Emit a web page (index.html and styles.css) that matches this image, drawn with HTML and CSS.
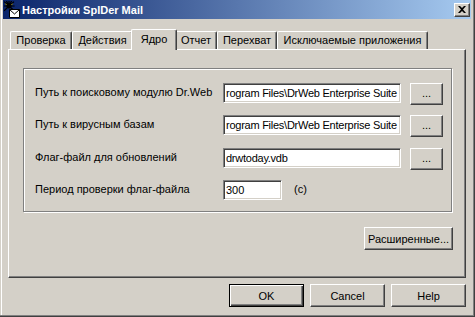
FILE: index.html
```html
<!DOCTYPE html>
<html lang="ru">
<head>
<meta charset="utf-8">
<title>Настройки SpIDer Mail</title>
<link rel="stylesheet" href="styles.css">
</head>
<body>
<div class="window">
  <div class="titlebar">
    <svg class="app-icon" width="16" height="17" viewBox="0 0 16 17">
      <g stroke="#000" stroke-width="1.2" fill="none" stroke-linecap="square">
        <path d="M0.5 1 L5 5 M5 0.5 L5 5 M9.5 1 L5 5 M0 5 L10 5 M0.5 9.5 L5 5 M9.5 9 L5 5 M2.5 0 L5 5 M7.5 0 L5 5"/>
      </g>
      <ellipse cx="5" cy="5" rx="2.6" ry="2.4" fill="#000"/>
      <path d="M1.5 3 L2.5 3.5 M8.5 3 L7.5 3.5" stroke="#d8c400" stroke-width="1"/>
      <path d="M5.5 8.5 H15.5 V16.5 H5.5 Z" fill="#fff" stroke="#000"/>
      <path d="M5.5 8.5 L10.5 13 L15.5 8.5" fill="none" stroke="#000"/>
    </svg>
    <span class="title">Настройки SpIDer Mail</span>
    <span class="close-btn">
      <svg width="8" height="7" viewBox="0 0 8 7"><path d="M0 0 L2 0 L4 2 L6 0 L8 0 L5 3.5 L8 7 L6 7 L4 5 L2 7 L0 7 L3 3.5 Z" fill="#000"/></svg>
    </span>
  </div>
  <div class="content">
    <div class="tabs">
      <div class="tab tab-check">Проверка</div>
      <div class="tab tab-actions">Действия</div>
      <div class="tab tab-core selected">Ядро</div>
      <div class="tab tab-report">Отчет</div>
      <div class="tab tab-intercept">Перехват</div>
      <div class="tab tab-excl">Исключаемые приложения</div>
    </div>
    <div class="panel">
      <div class="group">
        <div class="row">
          <span class="label">Путь к поисковому модулю Dr.Web</span>
          <span class="field wide">rogram Files\DrWeb Enterprise Suite</span>
          <button class="btn browse">...</button>
        </div>
        <div class="row">
          <span class="label">Путь к вирусным базам</span>
          <span class="field wide">rogram Files\DrWeb Enterprise Suite</span>
          <button class="btn browse">...</button>
        </div>
        <div class="row row3">
          <span class="label">Флаг-файл для обновлений</span>
          <span class="field wide">drwtoday.vdb</span>
          <button class="btn browse">...</button>
        </div>
        <div class="row">
          <span class="label">Период проверки флаг-файла</span>
          <span class="field short">300</span>
          <span class="unit">(c)</span>
        </div>
      </div>
      <div class="panel-actions">
        <button class="btn adv">Расширенные...</button>
      </div>
    </div>
    <div class="dialog-buttons">
      <button class="btn dlg default">OK</button>
      <button class="btn dlg">Cancel</button>
      <button class="btn dlg">Help</button>
    </div>
  </div>
</div>
</body>
</html>
```
FILE: styles.css
```css
* { box-sizing: border-box; }
html, body { margin: 0; padding: 0; }
body {
  width: 475px;
  height: 317px;
  background: #d4d0c8;
  font-family: "Liberation Sans", Arial, sans-serif;
  font-size: 11px;
  color: #000;
  overflow: hidden;
}
.window {
  width: 475px;
  height: 317px;
  padding: 0 4px 3px 3px;
  background: #d4d0c8;
  box-shadow: inset -1px -1px 0 #404040, inset -2px -2px 0 #808080, inset 1px 0 0 #d4d0c8, inset 2px 0 0 #fff;
  display: flex;
  flex-direction: column;
}
.titlebar {
  height: 19px;
  display: flex;
  align-items: center;
  padding-left: 1px;
  padding-right: 1px;
  background: linear-gradient(to right, #0a246a, #a6caf0);
}
.app-icon { display: block; flex: none; }
.title {
  margin-left: 2px;
  color: #fff;
  font-weight: bold;
  font-size: 11px;
  flex: 1;
  white-space: nowrap;
}
.close-btn {
  width: 16px;
  height: 14px;
  background: #d4d0c8;
  border: 1px solid;
  border-color: #fff #404040 #404040 #fff;
  box-shadow: inset -1px -1px 0 #808080;
  display: flex;
  align-items: center;
  justify-content: center;
  padding-bottom: 1px;
}
.close-btn svg { display: block; }
.content {
  flex: 1;
  display: flex;
  flex-direction: column;
}
.tabs {
  height: 30px;
  display: flex;
  align-items: flex-end;
  padding-left: 7px;
}
.tab {
  height: 18px;
  border-top: 1px solid #fff;
  border-left: 1px solid #fff;
  border-right: 1px solid #404040;
  box-shadow: inset -1px 0 0 #808080;
  border-radius: 2px 2px 0 0;
  display: flex;
  align-items: center;
  justify-content: center;
  white-space: nowrap;
  padding-bottom: 1px;
  background: #d4d0c8;
}
.tab-check { width: 62px; }
.tab-actions { width: 61px; }
.tab-core { width: 42px; }
.tab-report { width: 42px; }
.tab-intercept { width: 60px; }
.tab-excl { width: 151px; }
.tab.selected {
  width: 46px;
  height: 21px;
  margin: 0 -2px -1px -2px;
  position: relative;
  z-index: 1;
  padding-bottom: 3px;
}
.panel {
  margin: 0 5px 0 5px;
  height: 229px;
  border-top: 1px solid #fff;
  border-left: 1px solid #fff;
  border-right: 1px solid #404040;
  border-bottom: 1px solid #404040;
  box-shadow: inset -1px -1px 0 #808080;
  display: flex;
  flex-direction: column;
}
.group {
  margin: 18px 13px 0 14px;
  height: 144px;
  border: 1px solid #808080;
  box-shadow: inset 1px 1px 0 #fff, 1px 1px 0 #fff;
  padding: 14px 0 0 11px;
  display: flex;
  flex-direction: column;
  gap: 10px;
}
.row {
  height: 22px;
  display: flex;
  align-items: flex-start;
}
.row3 { margin-top: 1px; }
.label {
  width: 188px;
  height: 20px;
  line-height: 18px;
  white-space: nowrap;
}
.field {
  height: 20px;
  background: #fff;
  border: 1px solid;
  border-color: #808080 #fff #fff #808080;
  box-shadow: inset 1px 1px 0 #404040, inset -1px -1px 0 #d4d0c8;
  padding: 0 1px 0 2px;
  line-height: 18px;
  white-space: nowrap;
  overflow: hidden;
}
.field.wide { width: 178px; letter-spacing: -0.25px; }
.field.short { width: 59px; }
.unit {
  margin-left: 12px;
  line-height: 18px;
}
.btn {
  font-family: inherit;
  font-size: 11px;
  color: #000;
  background: #d4d0c8;
  border: 1px solid;
  border-color: #fff #404040 #404040 #fff;
  box-shadow: inset -1px -1px 0 #808080;
  padding: 0;
  margin: 0;
  border-radius: 0;
  display: flex;
  align-items: center;
  justify-content: center;
}
.browse {
  width: 33px;
  height: 22px;
  margin-left: 9px;
  padding-bottom: 2px;
}
.panel-actions {
  display: flex;
  justify-content: flex-end;
  margin: 15px 12px 0 0;
}
.adv {
  width: 89px;
  height: 23px;
}
.dialog-buttons {
  display: flex;
  justify-content: flex-end;
  gap: 6px;
  margin: 6px 5px 0 0;
}
.dlg {
  width: 75px;
  height: 23px;
}
.dlg.default {
  border: 1px solid #000;
  box-shadow: inset 1px 1px 0 #fff, inset -1px -1px 0 #404040, inset -2px -2px 0 #808080;
}
```
